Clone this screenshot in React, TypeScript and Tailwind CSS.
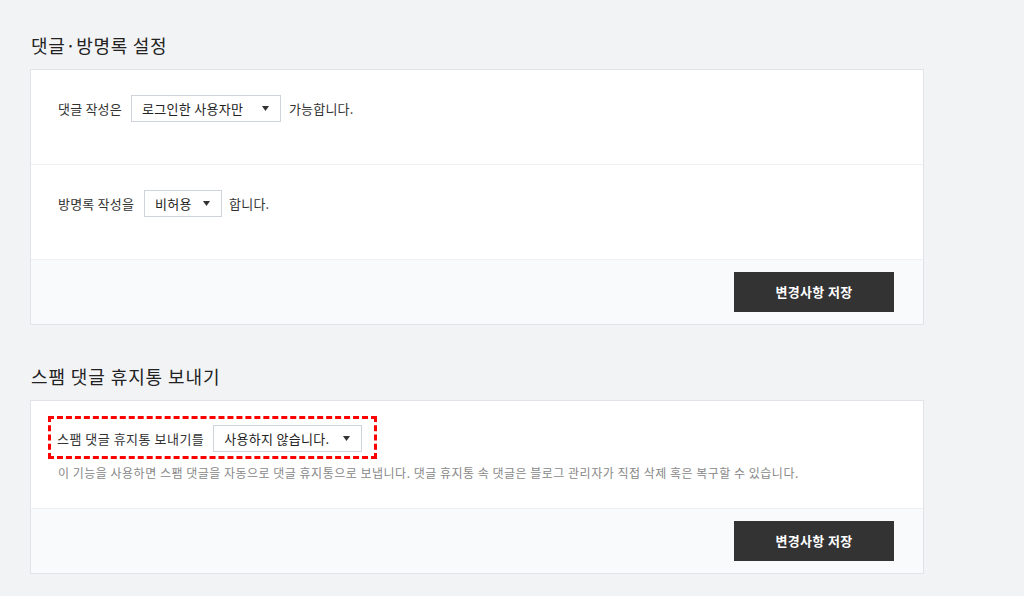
import React from "react";

const font = { fontFamily: '"Noto Sans CJK KR", "Noto Sans", sans-serif' };

function Caret() {
  return (
    <svg width="7" height="5" viewBox="0 0 7 5" className="shrink-0">
      <path d="M0 0h7L3.5 5z" fill="#333" />
    </svg>
  );
}

function Select({ label, width }: { label: string; width: string }) {
  return (
    <div className={`flex h-[27px] items-center justify-between border border-[#cfd3da] bg-white pl-[10px] pr-[11px] text-[13px] tracking-[0.3px] text-[#222] ${width}`}>
      <span>{label}</span>
      <Caret />
    </div>
  );
}

function SaveBar() {
  return (
    <div className="flex h-[64px] items-center justify-end bg-[#f9fafb] pr-[29px]">
      <button className="h-[40px] w-[160px] bg-[#333333] text-[13px] font-bold tracking-[0.3px] text-white">변경사항 저장</button>
    </div>
  );
}

export default function App() {
  return (
    <div className="min-h-[596px] w-full bg-[#f2f3f5] pl-[30px] pt-[33px] text-[#333]" style={font}>
      <div className="w-[894px]">
        <h2 className="mb-[12px] pl-[1px] text-[18px] leading-[24px] tracking-[0.7px] text-[#222]">댓글·방명록 설정</h2>
        <div className="border border-[#e1e3e9] bg-white">
          <div className="flex h-[95px] items-start border-b border-[#eef0f3] pl-[27px] pt-[25px] text-[13px] tracking-[0.2px]">
            <span className="mt-[4px] mr-[9px]">댓글 작성은</span>
            <Select label="로그인한 사용자만" width="w-[150px]" />
            <span className="mt-[4px] ml-[8px]">가능합니다.</span>
          </div>
          <div className="flex h-[95px] items-start border-b border-[#eef0f3] pl-[27px] pt-[25px] text-[13px] tracking-[0.2px]">
            <span className="mt-[4px] mr-[10px]">방명록 작성을</span>
            <Select label="비허용" width="w-[78px]" />
            <span className="mt-[4px] ml-[7px]">합니다.</span>
          </div>
          <SaveBar />
        </div>

        <h2 className="mb-[12px] mt-[39px] pl-[1px] text-[18px] leading-[24px] tracking-[0.9px] text-[#222]">스팸 댓글 휴지통 보내기</h2>
        <div className="border border-[#e1e3e9] bg-white">
          <div className="h-[108px] border-b border-[#eef0f3] pl-[17px] pt-[15px]">
            <div className="flex w-fit items-center border-[3px] border-dashed border-[#ff0000] pb-[4px] pl-[6px] pr-[12px] pt-[6px] text-[13px] tracking-[0.5px]">
              <span className="mr-[9px]">스팸 댓글 휴지통 보내기를</span>
              <Select label="사용하지 않습니다." width="w-[149px]" />
            </div>
            <p className="mt-[5px] pl-[10px] text-[12px] tracking-[0.5px] text-[#888]">
              이 기능을 사용하면 스팸 댓글을 자동으로 댓글 휴지통으로 보냅니다. 댓글 휴지통 속 댓글은 블로그 관리자가 직접 삭제 혹은 복구할 수 있습니다.
            </p>
          </div>
          <SaveBar />
        </div>
      </div>
    </div>
  );
}
